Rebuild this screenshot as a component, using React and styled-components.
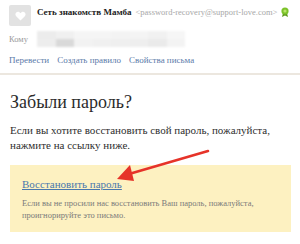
import React from "react";
import styled, { createGlobalStyle } from "styled-components";

const Global = createGlobalStyle`
  html, body { margin: 0; padding: 0; background: #fff; }
  body { width: 300px; height: 244px; overflow: hidden; font-family: "Liberation Serif", serif; }
`;

const Page = styled.div`
  position: relative;
  width: 300px;
  height: 244px;
`;

const Header = styled.div`
  padding: 5px 9px 0 9px;
`;

const SenderRow = styled.div`
  display: flex;
  align-items: flex-start;
  gap: 6px;
`;

const Avatar = styled.div`
  width: 22px;
  height: 21px;
  background: #e2e2e2;
  border-radius: 2px;
  display: flex;
  align-items: center;
  justify-content: center;
`;

const SenderText = styled.div`
  flex: 1;
  display: flex;
  align-items: center;
  margin-top: 2px;
  font-size: 9px;
  white-space: nowrap;
`;

const Name = styled.span`
  font-weight: bold;
  color: #222;
`;

const Email = styled.span`
  color: #a8a8a8;
  margin-left: 4px;
  font-size: 8.5px;
`;

const Badge = styled.svg`
  margin-left: auto;
  margin-right: 2px;
`;

const ToRow = styled.div`
  display: flex;
  align-items: center;
  gap: 10px;
  margin-top: 5px;
`;

const ToLabel = styled.span`
  font-size: 8.5px;
  color: #9a9a9a;
  width: 18px;
`;

const Blur = styled.div`
  display: grid;
  grid-template-columns: repeat(8, 1fr);
  grid-template-rows: 8px 8px;
  width: 148px;
  filter: blur(1.2px);
`;

const Cell = styled.div`
  background: ${(p) => p.$c};
`;

const Actions = styled.div`
  display: flex;
  gap: 8px;
  margin-top: 8px;
  font-size: 9px;
  color: #5b7aa9;
`;

const Divider = styled.div`
  height: 2px;
  background: #ece7df;
  margin-top: 8px;
`;

const Content = styled.div`
  padding: 0 9px 0 10px;
`;

const Title = styled.h1`
  margin: 16px 0 0 0;
  font-family: "Liberation Serif", serif;
  font-weight: normal;
  font-size: 18px;
  line-height: 22px;
  color: #2b2b2b;
`;

const Para = styled.p`
  margin: 10px 0 0 0;
  font-size: 11px;
  line-height: 15px;
  color: #2e2e2e;
`;

const Notice = styled.div`
  margin-top: 12px;
  background: #fdf1c1;
  padding: 12px 12px 11px 12px;
`;

const RestoreLink = styled.a`
  font-size: 11px;
  color: #4a78ad;
  text-decoration: underline;
  display: block;
  line-height: 14px;
`;

const Small = styled.p`
  margin: 6px 0 0 0;
  font-size: 8.5px;
  line-height: 12px;
  color: #7a7a7a;
`;

const Arrow = styled.svg`
  position: absolute;
  left: 0;
  top: 0;
  pointer-events: none;
`;

const cellsTop = ["#ececec", "#f0f0f0", "#f5f5f5", "#f5f5f5", "#f3f3f3", "#f4f4f4", "#f1f1f1", "#f6f6f6"];
const cellsBot = ["#ededed", "#d9d9d9", "#f2f2f2", "#f0f0f0", "#efefef", "#eeeeee", "#eaeaea", "#f3f3f3"];

export default function App() {
  return (
    <Page>
      <Global />
      <Header>
        <SenderRow>
          <Avatar>
            <svg width="11" height="10" viewBox="0 0 24 22">
              <path d="M12 21 L2.5 11.5 C-0.5 8.5 0.5 3 5 2 C8 1.3 10.5 3 12 5 C13.5 3 16 1.3 19 2 C23.5 3 24.5 8.5 21.5 11.5 Z" fill="#fff" />
            </svg>
          </Avatar>
          <SenderText>
            <Name>Сеть знакомств Мамба</Name>
            <Email>&lt;password-recovery@support-love.com&gt;</Email>
            <Badge width="8" height="10" viewBox="0 0 8 10">
              <path d="M2 6 L1 10 L4 8.5 L7 10 L6 6 Z" fill="#5f9a1e" />
              <circle cx="4" cy="4" r="3.6" fill="#7cc22a" />
              <circle cx="4" cy="4" r="1.6" fill="#b8e36a" />
            </Badge>
          </SenderText>
        </SenderRow>
        <ToRow>
          <ToLabel>Кому</ToLabel>
          <Blur>
            {cellsTop.map((c, i) => (
              <Cell key={"t" + i} $c={c} />
            ))}
            {cellsBot.map((c, i) => (
              <Cell key={"b" + i} $c={c} />
            ))}
          </Blur>
        </ToRow>
        <Actions>
          <span>Перевести</span>
          <span>Создать правило</span>
          <span>Свойства письма</span>
        </Actions>
      </Header>
      <Divider />
      <Content>
        <Title>Забыли пароль?</Title>
        <Para>
          Если вы хотите восстановить свой пароль, пожалуйста,
          <br />
          нажмите на ссылку ниже.
        </Para>
        <Notice>
          <RestoreLink href="#">Восстановить пароль</RestoreLink>
          <Small>
            Если вы не просили нас восстановить Ваш пароль, пожалуйста,
            <br />
            проигнорируйте это письмо.
          </Small>
        </Notice>
      </Content>
      <Arrow width="300" height="244" viewBox="0 0 300 244">
        <line x1="208" y1="151" x2="129" y2="174" stroke="#e63329" strokeWidth="2.6" strokeLinecap="round" />
        <path d="M117 179 L130 165 L134 181 Z" fill="#e63329" />
      </Arrow>
    </Page>
  );
}
